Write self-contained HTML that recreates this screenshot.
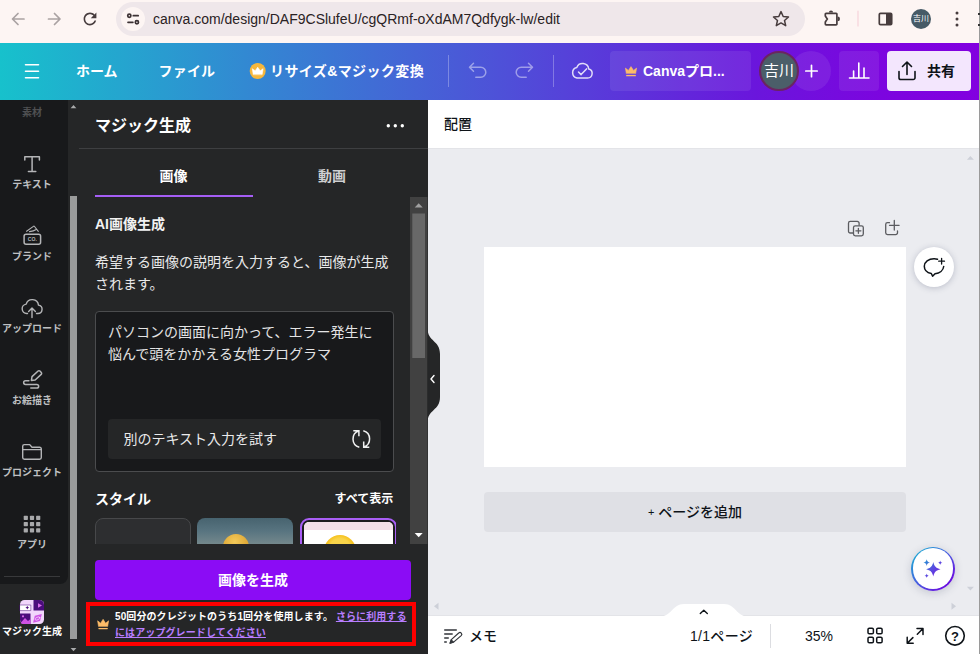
<!DOCTYPE html>
<html lang="ja"><head><meta charset="utf-8"><title>Canva</title>
<style>
*{box-sizing:border-box;margin:0;padding:0}
html,body{width:980px;height:654px;overflow:hidden;background:#ebecf0;font-family:"Liberation Sans","Noto Sans CJK JP",sans-serif;}
.abs,.t{position:absolute}
.t{white-space:nowrap;line-height:20px;height:20px}
svg{position:absolute;overflow:visible}
#chrome{left:0;top:0;width:980px;height:43px;background:#fdf5f3}
#url{left:116px;top:2px;width:689px;height:34px;border-radius:17px;background:#efe7ea}
#urlc{left:121px;top:7px;width:24px;height:24px;border-radius:12px;background:#fdf5f3}
#urltxt{left:153px;top:9px;font-size:14px;color:#2a2224}
#hdr{left:0;top:43px;width:980px;height:57px;background:linear-gradient(90deg,#17c1cc 0%,#3289d2 25%,#4e51d8 51%,#6a16dc 77%,#7c05df 90%,#8200e0 100%)}
.hd{color:#fff;font-weight:bold;font-size:14px}
.vsep{width:1px;top:55px;height:32px;background:rgba(255,255,255,.28)}
.hbtn{top:51px;height:40px;border-radius:4px;background:rgba(255,255,255,.08)}
#rail{left:0;top:100px;width:68px;height:484px;background:#18191b;border-radius:0 0 8px 0}
#panel{left:0;top:100px;width:428px;height:554px;background:#252627}
#canvas{left:428px;top:100px;width:552px;height:554px;background:#ebecf0}
#topbar{left:428px;top:100px;width:552px;height:49px;background:#fff;border-bottom:1px solid #e3e4e8}
#page{left:484px;top:247px;width:422px;height:220px;background:#fff}
#addpage{left:484px;top:492px;width:422px;height:40px;background:#dfe0e5;border-radius:4px}
#foot{left:428px;top:615px;width:552px;height:39px;background:#fff;border-top:1px solid #e3e4e8}
.rl{color:#bfc0c2;font-size:10px;font-weight:bold;text-align:center;width:64px;left:0;line-height:14px;height:14px}
.ft{font-size:14px;color:#0e1318;font-weight:500}
</style></head><body>
<!-- ===== browser chrome ===== -->
<div class="abs" id="chrome"></div>
<div class="abs" id="url"></div>
<div class="abs" id="urlc"></div>
<div class="t" id="urltxt">canva.com/design/DAF9CSlufeU/cgQRmf-oXdAM7Qdfygk-lw/edit</div>
<svg style="left:0;top:0" width="980" height="43" viewBox="0 0 980 43" fill="none" stroke-linecap="round" stroke-linejoin="round">
 <!-- back -->
 <path d="M24 19H13M18 13.5L12.5 19L18 24.5" stroke="#aaa2a2" stroke-width="1.7"/>
 <!-- forward -->
 <path d="M48.5 19H59.5M54.5 13.5L60 19L54.5 24.5" stroke="#aaa2a2" stroke-width="1.7"/>
 <!-- reload -->
 <path d="M17.65 6.35C16.2 4.9 14.21 4 12 4c-4.42 0-7.99 3.58-7.990 8s3.570 8 7.990 8c3.730 0 6.840-2.550 7.730-6h-2.080c-.820 2.330-3.040 4-5.650 4-3.310 0-6-2.690-6-6s2.690-6 6-6c1.660 0 3.140.690 4.220 1.780L13 11h7V4l-2.350 2.350z" fill="#473c3d" stroke="none" transform="translate(90 19) scale(0.8) translate(-12 -12)"/>
 <!-- site settings -->
 <g stroke="#3c3234" stroke-width="1.7">
  <circle cx="129.300" cy="15.700" r="1.600"/><path d="M133.300 15.700h4.900"/>
  <circle cx="136.900" cy="22.300" r="1.600"/><path d="M128 22.300h4.900"/>
 </g>
 <!-- star -->
 <path d="M781 11.6l2.2 4.9 5.3.5-4 3.5 1.2 5.2-4.7-2.8-4.7 2.8 1.2-5.2-4-3.5 5.3-.5z" stroke="#473c3d" stroke-width="1.5"/>
 <!-- puzzle -->
 <path d="M825.300 15.900V14.100a.8.8 0 0 1 .8-.8H836.100a.8.8 0 0 1 .8.8V24.100a.8.8 0 0 1-.8.8H826.100a.8.8 0 0 1-.8-.8V22L827.300 18.950z" stroke="#473c3d" stroke-width="1.700" stroke-linejoin="miter"/>
 <path d="M828.900 12.600a2.100 2.100 0 0 1 4.200 0zM837.600 16.500a2.400 2.400 0 0 1 0 4.800z" fill="#473c3d" stroke="none"/>
 <!-- separator -->
 <path d="M858 11v15" stroke="#f7d3da" stroke-width="1.2"/>
 <!-- side panel -->
 <rect x="879.3" y="13.4" width="12.4" height="11.2" rx="1.2" stroke="#473c3d" stroke-width="1.7"/>
 <rect x="886" y="13.4" width="5.7" height="11.2" fill="#473c3d" stroke="none"/>
 <!-- avatar -->
 <circle cx="921" cy="19" r="10" fill="#465a66" stroke="none"/>
 <!-- menu -->
 <g fill="#473c3d" stroke="none"><circle cx="957" cy="13" r="1.5"/><circle cx="957" cy="19" r="1.5"/><circle cx="957" cy="25" r="1.5"/></g>
</svg>
<div class="t" style="left:911px;top:9px;width:20px;text-align:center;font-size:8px;color:#fff">吉川</div>

<!-- ===== canva header ===== -->
<div class="abs" id="hdr"></div>
<div class="t hd" style="left:76px;top:61px">ホーム</div>
<div class="t hd" style="left:158.500px;top:61px;letter-spacing:.2px">ファイル</div>
<div class="t hd" style="left:270px;top:61px;letter-spacing:.4px">リサイズ&amp;マジック変換</div>
<div class="abs vsep" style="left:448px"></div>
<div class="abs vsep" style="left:553px"></div>
<div class="abs hbtn" style="left:610px;width:141px"></div>
<div class="t hd" style="left:643px;top:61px">Canvaプロ...</div>
<div class="abs" style="left:791px;top:51px;width:40px;height:40px;border-radius:20px;background:rgba(255,255,255,.08)"></div>
<div class="abs" style="left:759px;top:51px;width:40px;height:40px;border-radius:20px;background:#4b5e69;border:2px solid #6a2560"></div>
<div class="t" style="left:759px;top:61px;width:40px;text-align:center;font-size:15px;color:#fff">吉川</div>
<div class="abs hbtn" style="left:839px;width:40px"></div>
<div class="abs" style="left:887px;top:51px;width:84px;height:40px;border-radius:4px;background:#f3e6fd"></div>
<div class="t" style="left:927px;top:61px;font-size:14px;font-weight:bold;color:#0e1318">共有</div>
<svg style="left:0;top:43px" width="980" height="57" viewBox="0 43 980 57" fill="none" stroke-linecap="round" stroke-linejoin="round">
 <!-- hamburger -->
 <path d="M25.5 64.7h13M25.5 71.2h13M25.5 77.7h13" stroke="#fff" stroke-width="1.6"/>
 <!-- crown badge -->
 <circle cx="257.7" cy="71" r="8" fill="#f6b73c"/>
 <path d="M253.2 74.3l-.9-5.6 2.9 2.1 2.5-3.6 2.5 3.6 2.9-2.1-.9 5.6z" fill="#fff" stroke="#fff" stroke-width=".6"/>
 <!-- undo -->
 <path d="M473.5 64l-4 4 4 4M469.8 68h11a5 5 0 0 1 0 10h-5" stroke="rgba(255,255,255,.45)" stroke-width="1.5" transform="translate(0 -0.8)"/>
 <!-- redo -->
 <path d="M528.5 64l4 4-4 4M532.200 68h-11a5 5 0 0 0 0 10h5" stroke="rgba(255,255,255,.45)" stroke-width="1.5" transform="translate(0 -0.8)"/>
 <!-- cloud -->
 <path d="M577 78h10.500a4.600 4.600 0 0 0 1.200-9.050a6.200 6.200 0 0 0-11.900-1.500a5.400 5.400 0 0 0 .2 10.550z" stroke="rgba(255,255,255,.82)" stroke-width="1.5"/>
 <path d="M578.500 72l2.600 2.600 5.400-5.700" stroke="rgba(255,255,255,.82)" stroke-width="1.5"/>
 <!-- gold crown -->
 <path d="M626.300 73.300l-.9-5.200 3 2.300 2.600-3.800 2.600 3.800 3-2.300-.9 5.200z" fill="#fdbc68" stroke="#fdbc68" stroke-width=".6"/>
 <path d="M626.700 75.700h8.600" stroke="#fdbc68" stroke-width="1.300"/>
 <!-- plus -->
 <path d="M805.800 71h11.400M811.500 65.300v11.400" stroke="#fff" stroke-width="1.700"/>
 <!-- chart -->
 <path d="M849.500 78h19.500M853.600 77.500v-6.500M858.800 77.500v-14.500M864 77.500v-9.500" stroke="#fff" stroke-width="1.600"/>
 <!-- share -->
 <path d="M899 71.500v6.200a1.800 1.800 0 0 0 1.800 1.800h12.400a1.800 1.800 0 0 0 1.800-1.800v-6.200M907 74.500v-12M902.500 66.500l4.500-4.500 4.500 4.500" stroke="#0e1318" stroke-width="1.600"/>
</svg>

<!-- ===== side ===== -->
<div class="abs" id="panel"></div>
<div class="abs" id="rail"></div>
<!--RAIL0--><div class="t rl" style="top:106px;color:#4f5052;left:0">素材</div>
<div class="t rl" style="top:178px">テキスト</div>
<div class="t rl" style="top:250px">ブランド</div>
<div class="t rl" style="top:322px">アップロード</div>
<div class="t rl" style="top:394px">お絵描き</div>
<div class="t rl" style="top:466px">プロジェクト</div>
<div class="t rl" style="top:538px">アプリ</div>
<div class="t rl" style="top:625px;color:#fff;font-size:10px;width:64px">マジック生成</div>
<div class="abs" style="left:4px;top:576px;width:56px;height:1px;background:#38393b"></div>
<svg style="left:0;top:100px" width="80" height="554" viewBox="0 100 80 554" fill="none" stroke="#b4b5b7" stroke-width="1.4" stroke-linecap="round" stroke-linejoin="round">
 <!-- T -->
 <path d="M24.800 160v-3.300h14.600V160M32.100 156.700V171.400M28.400 171.400h7.400" stroke-width="1.500"/>
 <!-- brand -->
 <rect x="24.100" y="234.200" width="16.500" height="10" rx="2" stroke-width="1.500"/>
 <path d="M26.600 231.300L33.400 226.400a.8.8 0 0 1 1.100.1L38.300 231.300M29.500 231.600q4-.2 7.200-2.300" stroke-width="1.100"/>
 <text x="32.300" y="241.100" font-family="Liberation Sans, sans-serif" font-size="5.100" font-weight="bold" fill="#b4b5b7" stroke="none" text-anchor="middle">CO.</text>
 <!-- upload -->
 <path d="M27.500 313.500h-.8a4.700 4.700 0 0 1-.5-9.350a6.300 6.300 0 0 1 12.300 1a4.200 4.200 0 0 1-.7 8.350h-1.300"/>
 <path d="M32 317.500v-9M28.600 311.400l3.400-3.400 3.400 3.400"/>
 <!-- draw -->
 <path d="M-6.300 0L-3.300-2.300H5a1.300 1.300 0 0 1 1.300 1.300V1a1.300 1.300 0 0 1-1.300 1.300H-3.300z" transform="translate(36 376.100) rotate(-43)" stroke-width="1.500"/>
 <path d="M28.900 380.700h-3.400a1.850 1.850 0 0 0 0 3.700h11.300a1.850 1.850 0 0 1 0 3.700h-6" stroke-width="1.500"/>
 <!-- folder -->
 <path d="M22.700 446.300a1.700 1.700 0 0 1 1.700-1.700h5.300l2.300 2.700h7.600a1.700 1.700 0 0 1 1.700 1.700v8.500a1.700 1.700 0 0 1-1.700 1.700h-15.200a1.700 1.700 0 0 1-1.700-1.700z"/>
 <path d="M22.700 449.600h18.600" stroke-width="1.200"/>
 <!-- apps -->
 <g fill="#a8a9ab" stroke="none">
  <rect x="23.700" y="515.800" width="4.200" height="4.200" rx=".7"/><rect x="29.900" y="515.800" width="4.200" height="4.200" rx=".7"/><rect x="36.100" y="515.800" width="4.200" height="4.200" rx=".7"/>
  <rect x="23.700" y="522" width="4.200" height="4.200" rx=".7"/><rect x="29.900" y="522" width="4.200" height="4.200" rx=".7"/><rect x="36.100" y="522" width="4.200" height="4.200" rx=".7"/>
  <rect x="23.700" y="528.200" width="4.200" height="4.200" rx=".7"/><rect x="29.900" y="528.200" width="4.200" height="4.200" rx=".7"/><rect x="36.100" y="528.200" width="4.200" height="4.200" rx=".7"/>
 </g>
 <!-- magic icon -->
 <g stroke="none">
  <rect x="20" y="600" width="24" height="24" rx="4.500" fill="#f1d6fb"/>
  <path d="M33.500 600h6a4.500 4.500 0 0 1 4.500 4.500v6h-10.500z" fill="#4b0c7c"/>
  <path d="M38 603.200l4 2.300-4 2.300z" fill="#d86bea"/>
  <path d="M20 613.500h10.500v10.500h-6a4.500 4.500 0 0 1-4.500-4.500z" fill="#4b0c7c"/>
  <path d="M20.500 623l4.500-5 3 3 2.500-2v5h-6.500a4 4 0 0 1-3.500-1z" fill="#d052e4"/>
  <circle cx="23" cy="616.300" r="1.100" fill="#d86bea"/>
  <rect x="20" y="605" width="10.800" height="5.600" fill="#fff" stroke="#4b0c7c" stroke-width=".5"/>
  <path d="M27.300 605.800l.6 1.300 1.300.6-1.300.6-.6 1.300-.6-1.300-1.300-.6 1.300-.6z" fill="#4b0c7c"/>
  <path d="M34.800 615.800l7-1.700-1.700 7-7 1.700z" fill="#cf55e6"/>
  <ellipse cx="37.500" cy="618.500" rx="2.600" ry="1.300" transform="rotate(-25 37.500 618.500)" fill="none" stroke="#f4dcfb" stroke-width=".7"/>
 </g>
 <!-- left scrollbar -->
 <g stroke="none">
  <rect x="70" y="196" width="7" height="443" fill="#9a9b9b"/>
  <path d="M70.600 108.200l2.900-3.200 2.900 3.200z" fill="#a9aaab"/>
  <path d="M70.600 648l2.900 3.200 2.900-3.200z" fill="#a9aaab"/>
 </g>
</svg>
<!--RAIL1-->
<!--PANEL0--><div class="abs" style="left:79px;top:148px;width:349px;height:1px;background:#3e3f41"></div>
<div class="t" style="left:95px;top:115px;font-size:16px;font-weight:bold;color:#fff;line-height:22px;height:22px">マジック生成</div>
<div class="t" style="left:159.500px;top:166px;font-size:14px;font-weight:bold;color:#fff">画像</div>
<div class="t" style="left:318px;top:166px;font-size:14px;font-weight:bold;color:#cfd0d1">動画</div>
<div class="abs" style="left:95px;top:195px;width:158px;height:2px;background:#a55ef5"></div>
<div class="t" style="left:95px;top:214px;font-size:14px;font-weight:bold;color:#f2f2f2">AI画像生成</div>
<div class="t" style="left:95px;top:250.500px;font-size:14px;color:#e9e9ea;line-height:22px;height:44px;white-space:normal;width:300px">希望する画像の説明を入力すると、画像が生成されます。</div>
<div class="abs" style="left:95px;top:311px;width:299px;height:161px;border:1px solid #4b4c4e;border-radius:4px;background:#18191b"></div>
<div class="t" style="left:108px;top:321px;font-size:14px;color:#e4e4e5;line-height:22px;height:44px;white-space:normal;width:275px">パソコンの画面に向かって、エラー発生に悩んで頭をかかえる女性プログラマ</div>
<div class="abs" style="left:108px;top:419px;width:273px;height:40px;border-radius:4px;background:#252627"></div>
<div class="t" style="left:123.500px;top:428.500px;font-size:14px;color:#eaeaeb">別のテキスト入力を試す</div>
<div class="t" style="left:95px;top:489px;font-size:14px;font-weight:bold;color:#fff">スタイル</div>
<div class="t" style="left:334.500px;top:489px;font-size:12px;font-weight:bold;color:#fff">すべて表示</div>
<!-- thumbnails -->
<div class="abs" style="left:95px;top:518px;width:301px;height:26px;overflow:hidden">
 <div class="abs" style="left:0;top:0;width:96px;height:96px;border-radius:8px;background:#2d2e30;border:1px solid #47484a"></div>
 <div class="abs" style="left:102px;top:0;width:96px;height:96px;border-radius:8px;background:linear-gradient(180deg,#47636f 0,#587480 13px,#74888c 26px);overflow:hidden">
   <div class="abs" style="left:26px;top:15.500px;width:26px;height:26px;border-radius:13px;background:radial-gradient(circle at 45% 30%,#f3c95a,#d9a02e 70%)"></div>
 </div>
 <div class="abs" style="left:205px;top:0;width:97px;height:96px;border-radius:9px;border:2px solid #a95ef5;background:#1d1d1f"></div>
 <div class="abs" style="left:209px;top:4px;width:89px;height:90px;border-radius:5px;background:#fff;overflow:hidden">
   <div class="abs" style="left:0;top:0;width:89px;height:7.500px;background:#f3dfe8"></div>
   <div class="abs" style="left:20px;top:12.500px;width:32px;height:32px;border-radius:16px;background:radial-gradient(circle at 50% 45%,#f9d44a 0,#f9d44a 45%,#f6c21f 60%)"></div>
 </div>
</div>
<!-- bottom fixed area -->
<div class="abs" style="left:95px;top:560px;width:316px;height:40px;border-radius:4px;background:#8b0cf5"></div>
<div class="t" style="left:95px;top:570px;width:316px;text-align:center;font-size:14px;font-weight:bold;color:#fff">画像を生成</div>
<div class="abs" style="left:86px;top:602px;width:330px;height:44px;border:4px solid #ff0000"></div>
<div class="t" style="left:115px;top:609px;font-size:10px;letter-spacing:.1px;font-weight:bold;color:#fff;line-height:16.400px;height:33px;white-space:normal;width:296px">50回分のクレジットのうち1回分を使用します。 <span style="color:#b77dff;text-decoration:underline">さらに利用するにはアップグレードしてください</span></div>
<svg style="left:68px;top:100px" width="372" height="554" viewBox="68 100 372 554" fill="none" stroke-linecap="round" stroke-linejoin="round">
 <!-- dots -->
 <g fill="#fff"><circle cx="388.300" cy="125.700" r="1.700"/><circle cx="395.300" cy="125.700" r="1.700"/><circle cx="402.300" cy="125.700" r="1.700"/></g>
 <!-- refresh icon -->
 <g stroke="#f0f0f0" stroke-width="1.500" stroke-linecap="butt" stroke-linejoin="miter">
  <path d="M359.300 447.200A8.500 8.500 0 0 1 358.900 430.900M353.300 430.700H358.900V436.300"/>
  <path d="M363.300 430.700A8.500 8.500 0 0 1 363.700 447M369.300 447.200H363.700V441.600"/>
 </g>
 <!-- crown -->
 <path d="M98.500 626.200l-.9-5.400 3 2.400 2.500-3.900 2.500 3.900 3-2.400-.9 5.400z" fill="#fdbc68" stroke="#fdbc68" stroke-width=".6"/>
 <path d="M98.900 628.600h8.400" stroke="#fdbc68" stroke-width="1.200"/>
 <!-- panel scrollbar -->
 <rect x="410" y="197" width="17.500" height="347" fill="#414141"/>
 <rect x="412.300" y="213.500" width="12.700" height="144.500" fill="#686868"/>
 <path d="M414.700 207.500l4-4.200 4 4.200z" fill="#a0a0a0"/>
 <path d="M414.700 533l4 4.200 4-4.200z" fill="#fff"/>
</svg>
<!--PANEL1-->
<!-- ===== canvas ===== -->
<div class="abs" id="canvas"></div>
<div class="abs" id="topbar"></div>
<div class="abs" id="page"></div>
<div class="abs" id="addpage"></div>
<div class="abs" id="foot"></div>
<!--CANVAS0--><div class="t" style="left:444px;top:114px;font-size:14px;font-weight:500;color:#0e1318">配置</div>
<div class="t" style="left:484px;top:502px;width:422px;text-align:center;font-size:14px;font-weight:500;color:#0e1318"><span style="font-size:11px;position:relative;top:-1px">+</span> ページを追加</div>
<div class="abs" style="left:914px;top:247px;width:40px;height:40px;border-radius:20px;background:#fff;box-shadow:0 1px 6px rgba(60,70,100,.28)"></div>
<div class="abs" style="left:911px;top:546.500px;width:44px;height:44px;border-radius:22px;background:linear-gradient(135deg,#14b4d2 5%,#4a5ae0 50%,#6a0ee0 85%);box-shadow:0 2px 8px rgba(60,70,100,.22)"></div>
<div class="abs" style="left:912.600px;top:548.100px;width:40.800px;height:40.800px;border-radius:21px;background:#fff"></div>
<div class="t ft" style="left:469px;top:626px">メモ</div>
<div class="t ft" style="left:690px;top:626px;letter-spacing:.3px">1/1ページ</div>
<div class="t ft" style="left:805px;top:626px">35%</div>
<div class="abs" style="left:769.500px;top:624px;width:1px;height:24px;background:#dcdde1"></div>
<svg style="left:428px;top:100px" width="552" height="554" viewBox="428 100 552 554" fill="none" stroke-linecap="round" stroke-linejoin="round">
 <defs><linearGradient id="mg" gradientUnits="userSpaceOnUse" x1="923" y1="559" x2="941" y2="577"><stop offset="0" stop-color="#1f9bd0"/><stop offset=".55" stop-color="#5a4ae0"/><stop offset="1" stop-color="#7414e0"/></linearGradient></defs>
 <!-- collapse handle -->
 <path d="M427.500 328c0 14 12.500 12 12.500 26v43c0 14-12.500 12-12.500 26z" fill="#252627"/>
 <path d="M434 375.500l-3 3.500 3 3.500" stroke="#fff" stroke-width="1.400"/>
 <!-- duplicate -->
 <g stroke="#5b5c60" stroke-width="1.300">
  <path d="M853 233h-2.700a1.800 1.800 0 0 1-1.800-1.800v-8a1.800 1.800 0 0 1 1.800-1.800h7a1.800 1.800 0 0 1 1.800 1.800v1.800"/>
  <rect x="853.500" y="225.800" width="9.800" height="10" rx="1.800"/>
  <path d="M858.400 228.300v5M855.900 230.800h5"/>
 </g>
 <!-- add page -->
 <g stroke="#5b5c60" stroke-width="1.300">
  <path d="M889.500 222.700h-2a1.800 1.800 0 0 0-1.800 1.800v8.300a1.800 1.800 0 0 0 1.800 1.800h8.200a1.800 1.800 0 0 0 1.800-1.800v-1.800"/>
  <path d="M894.300 220.500v9.600M889.500 225.300h9.600"/>
 </g>
 <!-- comment -->
 <g stroke="#0e1318" stroke-width="1.500">
  <path d="M937.500 259.200a11 11 0 0 0-3.500-.5c-5.400 0-9.700 3.300-9.700 7.500c0 3.500 2.900 6.400 7 7.300l1.300 2.700l2.400-2.500c4.700-.5 8.300-3.300 8.700-7.200"/>
  <path d="M941.600 258.300v5.800M938.700 261.200h5.800" stroke-width="1.300"/>
 </g>
 <!-- magic stars -->
 <g fill="url(#mg)">
  <path d="M933.300 562c.9 4.300 2.900 6.300 7.200 7.200c-4.300.9-6.300 2.900-7.200 7.200c-.9-4.300-2.900-6.300-7.200-7.200c4.300-.9 6.300-2.900 7.200-7.200z"/>
  <path d="M926.700 559.300c.4 2.100 1.200 2.900 3.300 3.300c-2.100.4-2.900 1.200-3.300 3.300c-.4-2.100-1.200-2.900-3.300-3.300c2.100-.4 2.900-1.200 3.300-3.300z"/>
  <path d="M940.200 560.500c.3 1.400.8 1.900 2.200 2.200c-1.400.3-1.900.8-2.200 2.200c-.3-1.400-.8-1.900-2.200-2.200c1.400-.3 1.900-.8 2.200-2.200z"/>
  <path d="M926.700 573.500c.3 1.400.8 1.900 2.200 2.200c-1.400.3-1.900.8-2.200 2.200c-.3-1.400-.8-1.900-2.200-2.200c1.400-.3 1.900-.8 2.200-2.200z"/>
 </g>
 <!-- scroll arrows -->
 <g fill="#cdd0d8">
  <path d="M966.900 159.700l3.500-3.700 3.500 3.700z"/>
  <path d="M966.900 586.700l3.500 3.700 3.500-3.700z"/>
  <path d="M438.500 602.800l-4.500 3.500 4.500 3.500z"/>
  <path d="M951.500 602.800l4.500 3.500-4.500 3.500z"/>
 </g>
 <!-- footer tab handle -->
 <path d="M660 616.500c12 0 12-12.500 24-12.500h40c12 0 12 12.500 24 12.500z" fill="#fff"/>
 <path d="M700.300 613.500l3.500-3.300 3.500 3.300" stroke="#0e1318" stroke-width="1.400"/>
 <!-- memo icon -->
 <g stroke="#33363b" stroke-width="1.600" stroke-linecap="butt">
  <path d="M444.200 630h12.600M444.200 634h8.500M444.200 638h4.600M444.200 642h2.600"/>
  <path d="M450 643.300l1.300-3.700 7.400-6.600a1.700 1.700 0 0 1 2.500 2.600l-7.600 6.500z" stroke-width="1.200" stroke-linejoin="round"/>
  <path d="M450 643.300l1.300-3.700 2.300 2.500z" fill="#33363b" stroke-width=".8"/>
 </g>
 <!-- grid -->
 <g stroke="#0e1318" stroke-width="1.500">
  <rect x="868" y="628.300" width="5.400" height="5.400" rx="1.300"/><rect x="876.700" y="628.300" width="5.400" height="5.400" rx="1.300"/>
  <rect x="868" y="637.300" width="5.400" height="5.400" rx="1.300"/><rect x="876.700" y="637.300" width="5.400" height="5.400" rx="1.300"/>
 </g>
 <!-- expand -->
 <g stroke="#0e1318" stroke-width="1.500">
  <path d="M917 628.500h6v6M923 628.500l-5.700 5.700"/>
  <path d="M913.200 643.300h-6v-6M907.200 643.300l5.700-5.700"/>
 </g>
 <!-- help -->
 <circle cx="955" cy="635.800" r="9.300" stroke="#0e1318" stroke-width="1.600"/>
 <text x="955" y="640.600" font-family="Liberation Sans, sans-serif" font-size="13" font-weight="bold" fill="#0e1318" text-anchor="middle">?</text>
</svg>
<!--CANVAS1-->
<div class="abs" style="left:979px;top:0;width:1px;height:654px;background:#9a9a9a"></div>
<div class="abs" style="left:978px;top:13px;width:2px;height:2px;background:#333"></div><div class="abs" style="left:978px;top:24px;width:2px;height:2px;background:#333"></div>
</body></html>
